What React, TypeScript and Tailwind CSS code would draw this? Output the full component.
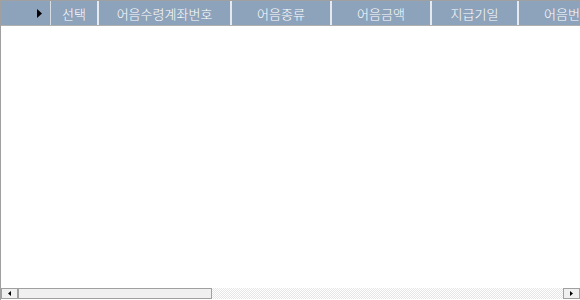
const columns = [
  { label: '선택', w: 'w-[48px]' },
  { label: '어음수령계좌번호', w: 'w-[133px]' },
  { label: '어음종류', w: 'w-[100px]' },
  { label: '어음금액', w: 'w-[100px]' },
  { label: '지급기일', w: 'w-[87px]' },
  { label: '어음번호', w: 'w-[100px]' },
]

const ArrowRight = () => (
  <svg width="5" height="9" viewBox="0 0 5 9" className="block">
    <path d="M0 0 L5 4.5 L0 9 Z" fill="#000" />
  </svg>
)

export default function App() {
  return (
    <div className="w-[580px] h-[300px] flex flex-col bg-white border-l border-t border-[#a0a0a0] overflow-hidden font-['Noto_Sans_CJK_KR','Noto_Sans',sans-serif]">
      {/* Header */}
      <div className="flex h-[25px] shrink-0 bg-[#8da3bb] border-b border-[#b0b0b0]">
        <div className="w-[50px] shrink-0 flex items-center justify-end pr-[8px] border-r border-[#d8dee6]">
          <ArrowRight />
        </div>
        {columns.map((c) => (
          <div
            key={c.label}
            className={`${c.w} shrink-0 flex items-center justify-center border-r-2 border-[#e6eaef] text-white text-[13px] font-light leading-none whitespace-nowrap`}
          >
            {c.label}
          </div>
        ))}
      </div>

      {/* Body */}
      <div className="flex-1 bg-white" />

      {/* Horizontal scrollbar */}
      <div className="flex h-[11px] shrink-0 mb-[1px]">
        <div className="w-[17px] shrink-0 border border-[#a0a0a0] bg-[#f0f0f0] flex items-center justify-center">
          <svg width="3" height="5" viewBox="0 0 3 5" className="block">
            <path d="M3 0 L0 2.5 L3 5 Z" fill="#000" />
          </svg>
        </div>
        <div className="w-[194px] shrink-0 border border-[#a0a0a0] bg-[#f0f0f0]" />
        <div className="flex-1 bg-[image:repeating-conic-gradient(#e6e6e6_0_25%,#ffffff_0_50%)] bg-[length:2px_2px]" />
        <div className="w-[17px] shrink-0 border border-[#a0a0a0] bg-[#f0f0f0] flex items-center justify-center">
          <svg width="3" height="5" viewBox="0 0 3 5" className="block">
            <path d="M0 0 L3 2.5 L0 5 Z" fill="#000" />
          </svg>
        </div>
      </div>
    </div>
  )
}
